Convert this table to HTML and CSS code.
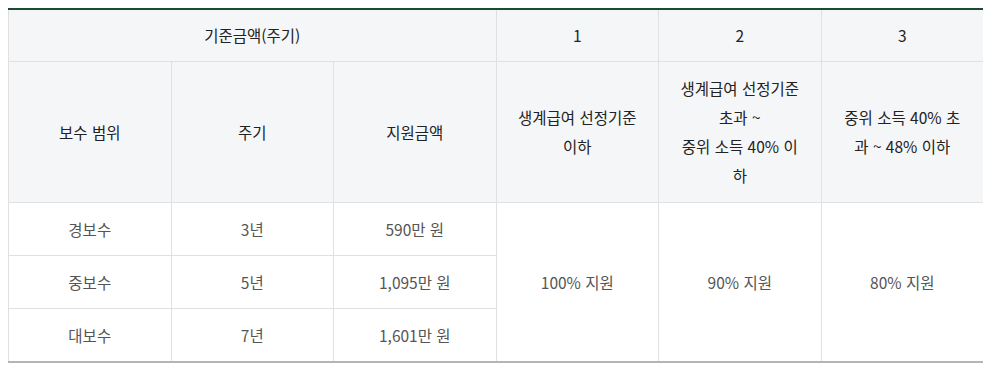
FILE: index.html
```html
<!DOCTYPE html>
<html lang="ko">
<head>
<meta charset="utf-8">
<link rel="stylesheet" href="styles.css">
</head>
<body>
<table class="tbl">
  <colgroup>
    <col class="c1"><col class="c2"><col class="c3"><col class="c4"><col class="c5"><col class="c6">
  </colgroup>
  <thead>
    <tr class="h1">
      <th colspan="3">기준금액(주기)</th>
      <th>1</th>
      <th>2</th>
      <th>3</th>
    </tr>
    <tr class="h2">
      <th>보수 범위</th>
      <th>주기</th>
      <th>지원금액</th>
      <th>생계급여 선정기준<br>이하</th>
      <th>생계급여 선정기준<br>초과 ~<br>중위 소득 40% 이<br>하</th>
      <th>중위 소득 40% 초<br>과 ~ 48% 이하</th>
    </tr>
  </thead>
  <tbody>
    <tr>
      <td>경보수</td>
      <td>3년</td>
      <td>590만 원</td>
      <td rowspan="3">100% 지원</td>
      <td rowspan="3">90% 지원</td>
      <td rowspan="3">80% 지원</td>
    </tr>
    <tr>
      <td>중보수</td>
      <td>5년</td>
      <td>1,095만 원</td>
    </tr>
    <tr>
      <td>대보수</td>
      <td>7년</td>
      <td>1,601만 원</td>
    </tr>
  </tbody>
</table>
</body>
</html>
```
FILE: styles.css
```css
html, body {
  margin: 0;
  padding: 0;
  background: #ffffff;
}
body {
  padding: 8px;
  font-family: "Noto Sans CJK KR", "Noto Sans", sans-serif;
  font-size: 15.5px;
  color: #555;
}
.tbl {
  width: 975px;
  border-collapse: collapse;
  table-layout: fixed;
  border-top: 2px solid #1b4a33;
  border-bottom: 2px solid #b5b5b5;
}
.c1, .c2, .c3, .c4, .c5 { width: 162.5px; }
.tbl th, .tbl td {
  border: 1px solid #e0e0e0;
  text-align: center;
  vertical-align: middle;
  padding: 12px 6px;
  white-space: nowrap;
}
.tbl th:first-child, .tbl td:first-child { border-left: 1px solid #e0e0e0; }
.tbl tr > :last-child { border-right: 0; }
.tbl thead tr:first-child th { border-top: 0; }
.tbl tbody tr:last-child td, .tbl td[rowspan] { border-bottom: 0; }
.tbl th {
  background: #f5f6f8;
  color: #222;
  font-weight: 400;
  line-height: 29px;
}
.h1 th { padding-top: 11px; padding-bottom: 11px; }
.tbl td {
  background: #fff;
  line-height: 28px;
}
```
